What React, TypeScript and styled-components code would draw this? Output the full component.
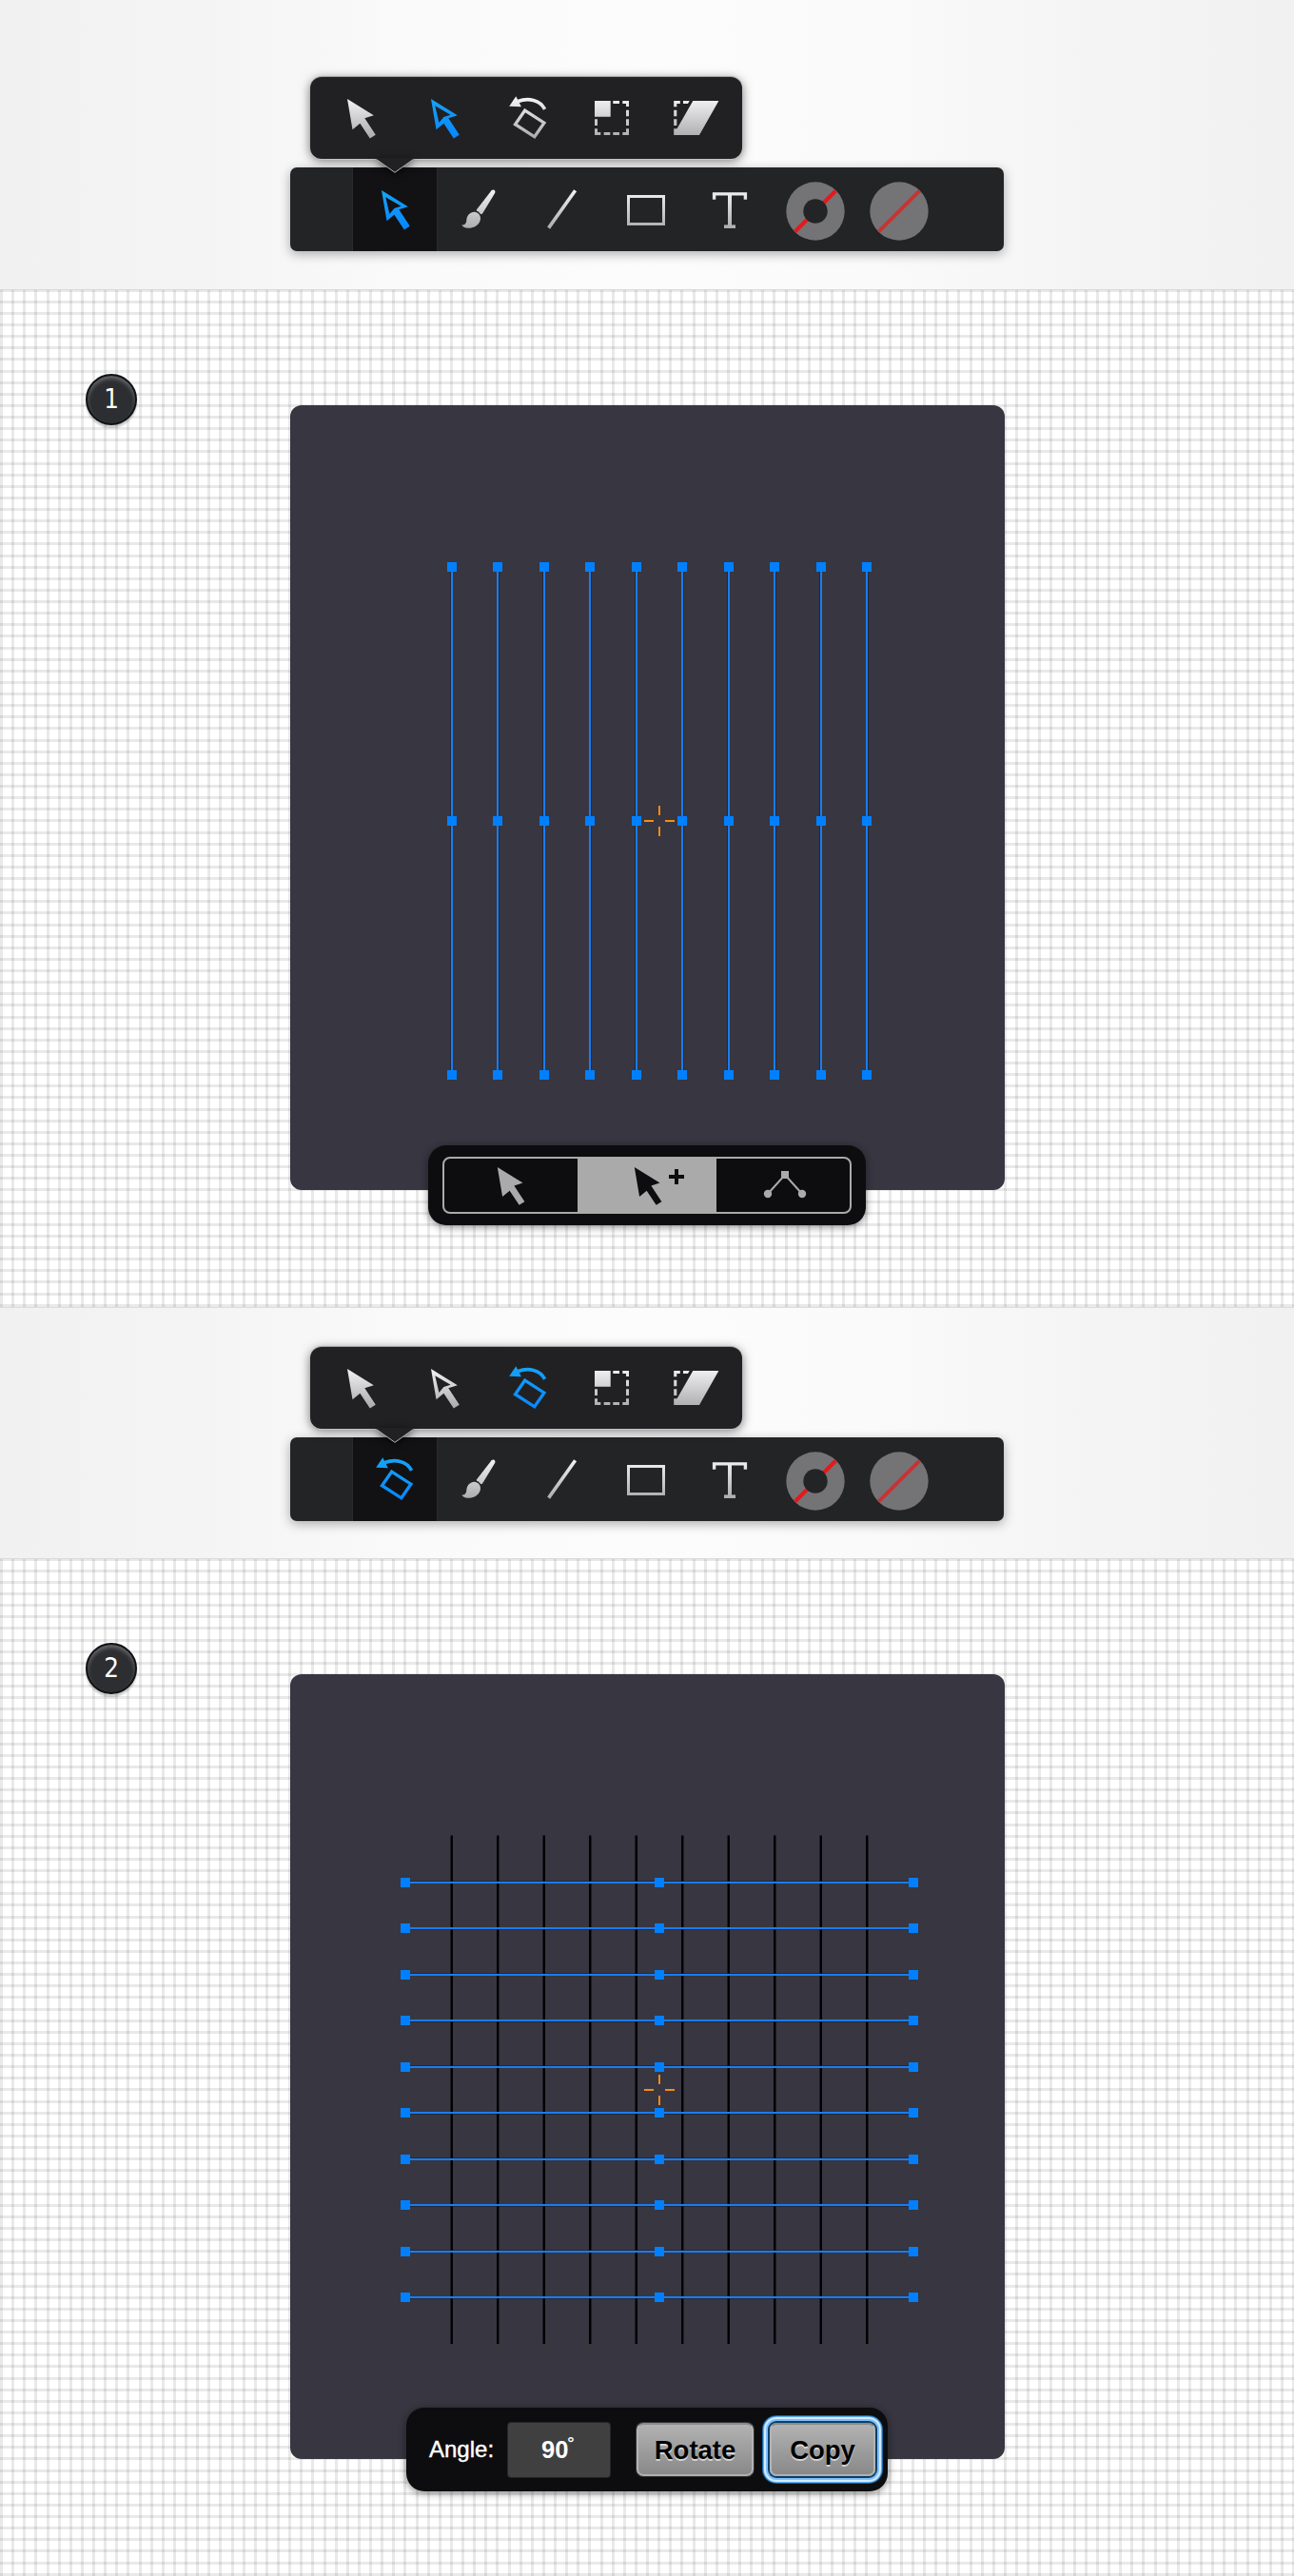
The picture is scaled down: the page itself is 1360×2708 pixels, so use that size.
import React from "react";
import styled, { createGlobalStyle, css } from "styled-components";

const GlobalStyle = createGlobalStyle`
  *, *::before, *::after { box-sizing: border-box; }
  body { margin: 0; background: #fff; font-family: "Liberation Sans", Arial, sans-serif; }
`;

/* ---------- graph paper ---------- */

const TILE = 97;
const COLUMNS = [0, 12, 24, 36, 49, 61, 73, 85];
const ROWS = [0, 12, 24, 36, 48, 60, 72, 85];

const rules = (direction: string, offsets: number[]) => {
  const ink = "rgba(0,0,0,0.085)";
  const stops = offsets
    .map((o) => `transparent ${o}px, ${ink} ${o}px, ${ink} ${o + 3}px, transparent ${o + 3}px`)
    .join(", ");
  return `linear-gradient(${direction}, ${stops})`;
};

const Page = styled.main`
  width: 1360px;
  display: flex;
  flex-direction: column;
`;

const ToolStage = styled.header<{ $top: number }>`
  padding-top: ${(p) => p.$top}px;
  height: ${(p) => p.$top + 223}px;
  display: flex;
  flex-direction: column;
  gap: 9px;
  background: linear-gradient(90deg, #f1f1f1, #f4f4f4 15%, #fafafa 32%, #fcfcfc 50%, #fafafa 68%, #f4f4f4 85%, #f1f1f1);
  border-top: ${(p) => (p.$top < 60 ? "1px solid #dcdcdc" : "0")};
`;

const Sheet = styled.section`
  height: 1070px;
  display: grid;
  grid-template-columns: 305px 751px 1fr;
  align-items: start;
  border-top: 1px solid #dadada;
  background-color: #fff;
  background-image: ${rules("to right", COLUMNS)}, ${rules("to bottom", ROWS)};
  background-size: ${TILE}px ${TILE}px;
  background-origin: border-box;
`;

/* ---------- toolbar ---------- */

const Popover = styled.div`
  position: relative;
  z-index: 2;
  margin-left: 326px;
  width: 454px;
  height: 86px;
  padding-left: 9px;
  display: flex;
  align-items: center;
  border-radius: 12px;
  background: #212123;
  box-shadow: 0 1px 0 #c4c4c4, 0 -1px 0 rgba(0, 0, 0, 0.22), 0 2px 11px rgba(0, 0, 0, 0.55);
`;

const Caret = styled.svg`
  position: absolute;
  left: 69px;
  top: 85px;
  overflow: visible;
  filter: drop-shadow(0 2px 4px rgba(0, 0, 0, 0.7));
`;

const Toolbar = styled.nav`
  margin-left: 305px;
  width: 750px;
  height: 88px;
  padding-left: 66px;
  display: flex;
  border-radius: 7px;
  background: #232426;
  box-shadow: 0 3px 12px rgba(0, 0, 0, 0.32);
`;

const ToolCell = styled.div<{ $active?: boolean }>`
  width: 88px;
  height: 88px;
  flex: none;
  ${(p) =>
    p.$active &&
    css`
      background: #121214;
      box-shadow: -1px 0 0 #2a2b2d, 1px 0 0 #2a2b2d;
    `}
`;

const ToolIcon = styled.svg`
  display: block;
  width: 88px;
  height: 88px;
`;

/* ---------- artboard ---------- */

const BadgeColumn = styled.div`
  padding: 88px 0 0 90px;
`;

const Badge = styled.div`
  width: 54px;
  height: 54px;
  display: flex;
  align-items: center;
  justify-content: center;
  border-radius: 50%;
  border: 2px solid #111214;
  background: #2d2e32;
  box-shadow: inset 0 3px 4px rgba(255, 255, 255, 0.28), 0 3px 2px rgba(0, 0, 0, 0.2);
  color: #fff;
  font: 400 27.5px/48px "DejaVu Sans Condensed", "DejaVu Sans", sans-serif;
  padding-bottom: 2px;
`;

const Artboard = styled.div`
  position: relative;
  margin-top: 121px;
  width: 751px;
  height: 825px;
  border-radius: 12px;
  background: #373641;
`;

const Drawing = styled.svg`
  display: block;
`;

const FloatingBar = styled.div<{ $left: number; $top: number; $width: number; $height: number }>`
  position: absolute;
  left: ${(p) => p.$left}px;
  top: ${(p) => p.$top}px;
  width: ${(p) => p.$width}px;
  height: ${(p) => p.$height}px;
  display: flex;
  align-items: center;
  border-radius: 19px;
  background: #0d0d0f;
  box-shadow: 0 2px 9px rgba(0, 0, 0, 0.45);
`;

const Segments = styled.div`
  width: 430px;
  height: 60px;
  margin: 0 auto;
  display: flex;
  border: 2px solid #aaa;
  border-radius: 8px;
  overflow: hidden;
`;

const Segment = styled.div<{ $active?: boolean }>`
  flex: ${(p) => (p.$active ? "0 0 146px" : "1 1 0")};
  background: ${(p) => (p.$active ? "#aaa" : "transparent")};
  color: ${(p) => (p.$active ? "#0d0d0f" : "#aaa")};
`;

const SegmentIcon = styled.svg`
  display: block;
  width: 140px;
  height: 56px;
`;

const Label = styled.label`
  margin-left: 24px;
  width: 82px;
  color: #fff;
  font-size: 24px;
  -webkit-text-stroke: 0.4px #fff;
`;

const AngleField = styled.div`
  width: 109px;
  height: 59px;
  padding-left: 35px;
  display: flex;
  align-items: center;
  border: 1px solid #262626;
  border-radius: 4px;
  background: #404040;
  color: #fff;
  font-size: 25.5px;
  font-weight: 700;
`;

const Degree = styled.span`
  font-size: 24px;
  font-weight: 400;
  margin: -4px 0 0 -1px;
`;

const Action = styled.button<{ $focused?: boolean }>`
  width: ${(p) => (p.$focused ? 111 : 123)}px;
  height: 56px;
  margin: 0 0 0 ${(p) => (p.$focused ? 17 : 27)}px;
  padding: 2px 0 0;
  border: 2px solid;
  border-color: #8a8a8a #b4b4b4 #b0b0b0;
  border-radius: 7px;
  background: linear-gradient(#b2b2b2, #898989);
  color: #000;
  font: 700 27.5px "Liberation Sans", Arial, sans-serif;
  text-shadow: 0 2px 0 rgba(255, 255, 255, 0.6);
  box-shadow: ${(p) =>
    p.$focused
      ? "0 0 0 2px #0c3f68, 0 0 0 4px #7fc0fb, 0 0 0 6px #d2ebff, 0 0 0 7px #66aeea, 0 0 0 8px #1766a8"
      : "0 0 0 1px #333"};
`;

/* ---------- icons ---------- */

const SILVER = "url(#silver)";
const BLUE = "url(#azure)";

const Paints = styled.svg`
  display: block;
  width: 0;
  height: 0;
`;

const PaintDefs = () => (
  <Paints aria-hidden>
    <defs>
      <linearGradient id="silver" gradientUnits="userSpaceOnUse" x1="0" y1="24" x2="0" y2="65">
        <stop offset="0" stopColor="#f2f2f4" />
        <stop offset="1" stopColor="#ababad" />
      </linearGradient>
      <linearGradient id="azure" gradientUnits="userSpaceOnUse" x1="0" y1="24" x2="0" y2="65">
        <stop offset="0" stopColor="#16a2f6" />
        <stop offset="1" stopColor="#0787ff" />
      </linearGradient>
    </defs>
  </Paints>
);

const POINTER = "M30 24 57.8 41.2 48.3 44.3 59.8 61.7 53.8 65.4 43.4 49.8 35.5 56.2Z";

const Pointer = ({ paint }: { paint: string }) => <path d={POINTER} fill={paint} />;

const DirectPointer = ({ paint }: { paint: string }) => (
  <path d={POINTER + "M34.3 31.2 38.4 49 43.4 43 50.6 40.7Z"} fill={paint} fillRule="evenodd" />
);

const Rotate = ({ paint }: { paint: string }) => (
  <g>
    <path d="M24.2 31.8 31.3 21.2 36.9 32.2Z" fill={paint} />
    <path d="M33.5 26.6C44 22.6 56.5 24.8 61.6 34.9" fill="none" stroke={paint} strokeWidth="3.7" />
    <path d="M40.7 36.1 60.9 49.1 50.8 63.8 30.5 50.7Z" fill="none" stroke={paint} strokeWidth="3.3" />
  </g>
);

const Scale = ({ paint }: { paint: string }) => (
  <path
    fill={paint}
    d="M26 26H42.7V42.7H26ZM45.3 26H52V29H45.3ZM55.3 26H62V32H59V29H55.3ZM59 35.7H62V42.3H59ZM59 45.3H62V52H59ZM62 55.3V62H55.3V59H59V55.3ZM45.3 59H52V62H45.3ZM35.7 59H42.3V62H35.7ZM26 55.3H29V59H32.3V62H26ZM26 45.3H29V52H26Z"
  />
);

const Shear = ({ paint }: { paint: string }) => (
  <path
    fill={paint}
    d="M41.3 26H68.4L48 62H21.2V55.3H24.3L25 54.5ZM21.2 26H27.8V29H24.3V32.3H21.2ZM31 26H37.7L36 29H31ZM21.2 35.7H24.3V42.3H21.2ZM21.2 45.3H24.3V52H21.2Z"
  />
);

const Brush = ({ paint }: { paint: string }) => (
  <g fill={paint}>
    <path d="M56.6 25.4C57.6 23.6 59.2 23 60.4 23.8 61.6 24.6 61.7 26 61 27.3L48.4 48C47.4 49.6 46.4 49.6 45.6 48.6 44.8 47 43.6 46.2 42.4 45.9 41.6 45.2 41.6 44.6 42.4 43.8Z" />
    <path d="M31.4 54.4C32 50 36.2 45.9 40.8 46.9 45 48 47 52 45.6 56 43.6 61.8 37.6 64.2 32.4 63.8 29.4 63.4 27.4 62.2 26.2 60.4 29.8 60.6 31.2 58.6 31.4 54.4Z" />
  </g>
);

const Line = ({ paint }: { paint: string }) => (
  <path d="M29.6 63.6 57.6 24.2" stroke={paint} strokeWidth="3.6" />
);

const Box = ({ paint }: { paint: string }) => (
  <path d="M25.5 30.5H62.5V59.5H25.5Z" fill="none" stroke={paint} strokeWidth="3" />
);

const TypeTool = ({ paint }: { paint: string }) => (
  <g fill="none" stroke={paint}>
    <path d="M27.6 33.8V27.9H60.4V33.8" strokeWidth="3.4" />
    <path d="M44 27V62" strokeWidth="4" />
    <path d="M38 62.2H50" strokeWidth="3.6" />
  </g>
);

const NoStroke = () => (
  <g>
    <circle cx="46" cy="46" r="30.7" fill="#747476" />
    <path d="M24.6 67.4 67.4 24.6" stroke="#e21a1c" strokeWidth="4.2" />
    <circle cx="46" cy="46" r="12.7" fill="#232426" />
  </g>
);

const NoFill = () => (
  <g>
    <circle cx="46" cy="46" r="30.7" fill="#747476" />
    <path d="M24.6 67.4 67.4 24.6" stroke="#c93234" strokeWidth="4" />
  </g>
);

type Tool = "direct" | "rotate";

const Glyph = ({ children }: { children: React.ReactNode }) => (
  <ToolIcon viewBox="0 0 88 88">{children}</ToolIcon>
);

const Tools = ({ active, top }: { active: Tool; top: number }) => (
  <ToolStage $top={top}>
    <Popover>
      <Glyph><Pointer paint={SILVER} /></Glyph>
      <Glyph><DirectPointer paint={active === "direct" ? BLUE : SILVER} /></Glyph>
      <Glyph><Rotate paint={active === "rotate" ? BLUE : SILVER} /></Glyph>
      <Glyph><Scale paint={SILVER} /></Glyph>
      <Glyph><Shear paint={SILVER} /></Glyph>
      <Caret width="40" height="17" viewBox="0 0 40 17">
        <path d="M0 0 1 2 20 15.5 39 2 40 0Z" fill="#212123" />
        <path d="M1 1.8 20 15.3 39 1.8" fill="none" stroke="#b4b4b4" strokeWidth="1" />
      </Caret>
    </Popover>
    <Toolbar>
      <ToolCell $active>
        <Glyph>{active === "direct" ? <DirectPointer paint={BLUE} /> : <Rotate paint={BLUE} />}</Glyph>
      </ToolCell>
      {[Brush, Line, Box, TypeTool].map((Icon, i) => (
        <ToolCell key={i}>
          <Glyph><Icon paint={SILVER} /></Glyph>
        </ToolCell>
      ))}
      <ToolCell><Glyph><NoStroke /></Glyph></ToolCell>
      <ToolCell><Glyph><NoFill /></Glyph></ToolCell>
    </Toolbar>
  </ToolStage>
);

/* ---------- selected paths ---------- */

const STEPS = [0, 48, 97, 145, 194, 242, 291, 339, 388, 436];

const Anchor = ({ x, y }: { x: number; y: number }) => (
  <rect x={x - 5} y={y - 5} width="10" height="10" fill="#0080ff" />
);

const Crosshair = () => (
  <path
    d="M372 437H382M394 437H404M388 421V431M388 443V453"
    stroke="#f58c18"
    strokeWidth="2"
  />
);

const VerticalPaths = () => (
  <Drawing width="751" height="825">
    {STEPS.map((s, i) => (
      <g key={s}>
        <path d={`M${169.75 + 48.5 * i} 170V704`} stroke="#0b1c38" strokeWidth="2.5" />
        <path d={`M${170 + s} 170V704`} stroke="#1a7cee" strokeWidth="2" />
        {[170, 437, 704].map((y) => <Anchor key={y} x={170 + s} y={y} />)}
      </g>
    ))}
    <Crosshair />
  </Drawing>
);

const CrossedPaths = () => (
  <Drawing width="751" height="825">
    {STEPS.map((s, i) => (
      <path key={s} d={`M${169.75 + 48.5 * i} 169.5V704`} stroke="#000" strokeWidth="2.4" />
    ))}
    {STEPS.map((s, i) => (
      <g key={s}>
        <path d={`M121 ${218.75 + 48.5 * i}H655`} stroke="#0b1c38" strokeWidth="2.5" />
        <path d={`M121 ${219 + s}H655`} stroke="#1a7cee" strokeWidth="2" />
        {[121, 388, 655].map((x) => <Anchor key={x} x={x} y={219 + s} />)}
      </g>
    ))}
    <Crosshair />
  </Drawing>
);

export default function App() {
  return (
    <Page>
      <GlobalStyle />
      <PaintDefs />
      <Tools active="direct" top={81} />
      <Sheet>
        <BadgeColumn><Badge>1</Badge></BadgeColumn>
        <Artboard>
          <VerticalPaths />
          <FloatingBar $left={145} $top={778} $width={460} $height={84}>
            <Segments>
              <Segment>
                <SegmentIcon viewBox="0 0 140 56">
                  <path transform="translate(27 -14) scale(.96)" d={POINTER} fill="currentColor" />
                </SegmentIcon>
              </Segment>
              <Segment $active>
                <SegmentIcon viewBox="0 0 140 56">
                  <path transform="translate(31 -14) scale(.96)" d={POINTER} fill="currentColor" />
                  <path d="M96 19H112M104 11V27" stroke="currentColor" strokeWidth="4" />
                </SegmentIcon>
              </Segment>
              <Segment>
                <SegmentIcon viewBox="0 0 140 56">
                  <path d="M54 37 72 17 90 37" fill="none" stroke="currentColor" strokeWidth="2" />
                  <rect x="68" y="13" width="8" height="8" fill="currentColor" />
                  <circle cx="54" cy="37" r="4.2" fill="currentColor" />
                  <circle cx="90" cy="37" r="4.2" fill="currentColor" />
                </SegmentIcon>
              </Segment>
            </Segments>
          </FloatingBar>
        </Artboard>
      </Sheet>
      <Tools active="rotate" top={41} />
      <Sheet>
        <BadgeColumn><Badge>2</Badge></BadgeColumn>
        <Artboard>
          <CrossedPaths />
          <FloatingBar $left={122} $top={771} $width={506} $height={88}>
            <Label>Angle:</Label>
            <AngleField>90<Degree>˚</Degree></AngleField>
            <Action>Rotate</Action>
            <Action $focused>Copy</Action>
          </FloatingBar>
        </Artboard>
      </Sheet>
    </Page>
  );
}
